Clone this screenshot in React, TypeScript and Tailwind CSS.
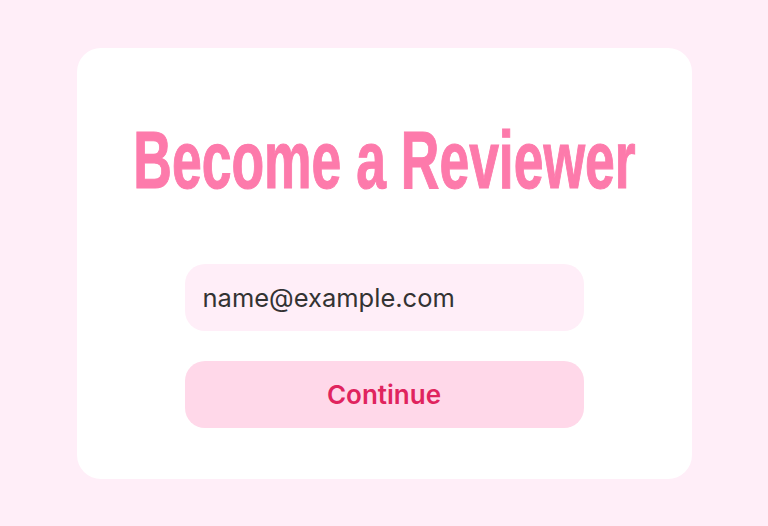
import React from "react";

export default function App() {
  return (
    <div className="w-[768px] h-[526px] bg-[#ffeef8] flex items-center justify-center">
      <div className="w-[615px] h-[431px] bg-white rounded-[24px] flex flex-col items-center pt-[72px]">
        <h1
          className="text-[#fd7aab] font-bold leading-none text-[81px] whitespace-nowrap scale-x-[0.66] [-webkit-text-stroke:1.2px_#fd7aab]"
          style={{ fontFamily: '"Liberation Sans", Arial, sans-serif' }}
        >
          Become a Reviewer
        </h1>
        <div className="mt-[63px] w-[399px] flex flex-col gap-[30px]" style={{ fontFamily: "Inter, sans-serif" }}>
          <input
            readOnly
            value="name@example.com"
            className="h-[67px] w-full rounded-[20px] bg-[#ffeef8] px-[18px] text-[25.5px] text-[#333333] outline-none"
          />
          <button className="h-[67px] w-full rounded-[20px] bg-[#ffd8e9] text-[26px] font-semibold text-[#e0245e]">
            Continue
          </button>
        </div>
      </div>
    </div>
  );
}
